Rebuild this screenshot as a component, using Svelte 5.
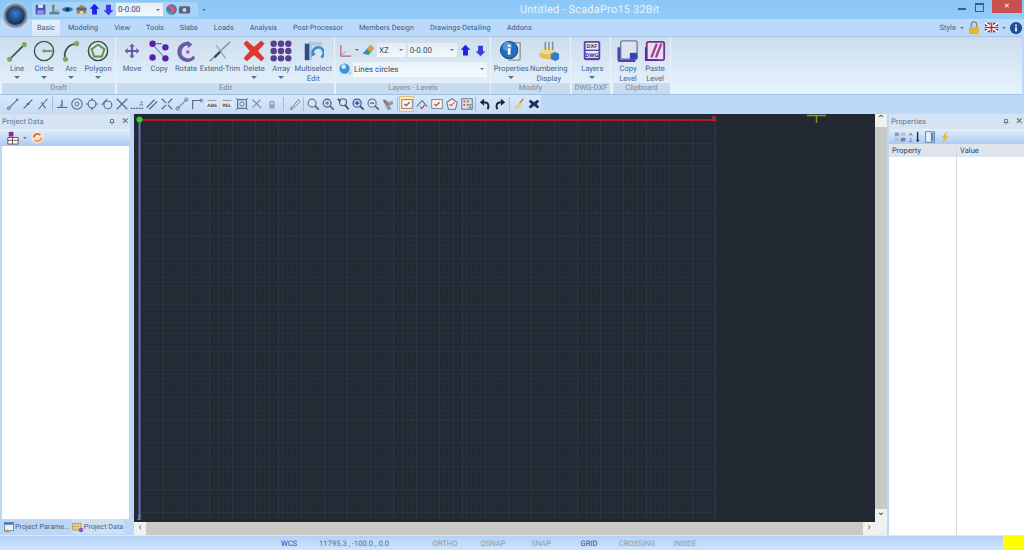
<script>
  const icons = {
    save: '<rect x="2" y="2" width="12" height="12" rx="1" fill="#4a52b8"/><rect x="5" y="2" width="6" height="4" fill="#dfe6f5"/><rect x="4" y="9" width="8" height="5" fill="#8f95d8"/>',
    tools: '<rect x="2" y="11" width="12" height="3" fill="#5d7f93"/><rect x="5" y="2" width="3" height="9" fill="#6d8a7c"/><path d="M8 8h5v3H8z" fill="#9fb2b8"/>',
    eye: '<path d="M1 8c3-4 11-4 14 0-3 4-11 4-14 0z" fill="#2b78b5"/><circle cx="8" cy="8" r="2.2" fill="#0d3358"/>',
    box: '<path d="M2 6l6-4 6 4v7H2z" fill="#b9793a"/><path d="M2 6h12v3H2z" fill="#3f6d9e"/><rect x="6" y="10" width="4" height="3" fill="#f2d9a4"/>',
    up: '<path d="M8 1l6 6h-3v7H5V7H2z" fill="#2222e0"/>',
    down: '<path d="M5 2h6v7h3l-6 6-6-6h3z" fill="#3a3ae8"/>',
    globe: '<circle cx="8" cy="8" r="6.5" fill="#2f7fa8"/><path d="M3 4c4-2 8 0 10 4-1 3-4 5-6 5 2-3 0-6-4-9z" fill="#e2557c"/><path d="M2 9c2 2 4 3 6 4-3 1-5-1-6-4z" fill="#6ecb8f"/>',
    cam: '<rect x="1" y="4" width="14" height="9" rx="2" fill="#56657a"/><circle cx="8" cy="8.5" r="2.5" fill="#c6d3e0"/>',
    lock: '<path d="M5 7V4a3 3 0 0 1 6 0v3" fill="none" stroke="#8a8a80" stroke-width="1.6"/><rect x="2.5" y="7" width="11" height="8" fill="#e8b52e"/>',
    flag: '<rect x="1" y="3" width="14" height="10" fill="#2a3f8f"/><path d="M1 3l14 10M15 3L1 13" stroke="#fff" stroke-width="2"/><path d="M8 3v10M1 8h14" stroke="#fff" stroke-width="3.4"/><path d="M8 3v10M1 8h14" stroke="#d4213d" stroke-width="1.8"/>',
    info: '<circle cx="8" cy="8" r="7" fill="#1f4f96"/><rect x="7" y="7" width="2" height="5" fill="#fff"/><rect x="7" y="4" width="2" height="2" fill="#fff"/>',
    pin: '<path d="M5 3h6v6H5zM8 9v4M3 9h10" fill="none" stroke="#60758c" stroke-width="1.8"/>',
    l1: '<path d="M3 13L13 3" stroke="#556a7c" stroke-width="1.3"/><circle cx="3" cy="13" r="1.6" fill="none" stroke="#556a7c"/><circle cx="13" cy="3" r="1.2" fill="#556a7c"/>',
    l2: '<path d="M3 13L13 3" stroke="#556a7c" stroke-width="1.3"/><circle cx="8" cy="8" r="1.5" fill="#556a7c"/>',
    l3: '<path d="M3 14L13 2M6 6l5 7" stroke="#556a7c" stroke-width="1.2"/>',
    perp: '<path d="M2 12h12M8 3v9" stroke="#556a7c" stroke-width="1.4"/><path d="M5 12a3 3 0 0 1 3-3" fill="none" stroke="#c85a5a"/>',
    center: '<circle cx="8" cy="8" r="6" fill="none" stroke="#556a7c" stroke-width="1.2"/><circle cx="8" cy="8" r="2.2" fill="none" stroke="#556a7c"/>',
    quad: '<circle cx="8" cy="8" r="4.5" fill="none" stroke="#556a7c" stroke-width="1.2"/><path d="M8 1v3M8 12v3M1 8h3M12 8h3" stroke="#556a7c" stroke-width="1.2"/>',
    tan: '<circle cx="9" cy="9" r="4.5" fill="none" stroke="#556a7c" stroke-width="1.2"/><path d="M2 9l6-7" stroke="#556a7c" stroke-width="1.2"/>',
    cross: '<path d="M2 2l12 12M14 2L2 14" stroke="#556a7c" stroke-width="1.4"/>',
    dash: '<path d="M1 13h14" stroke="#556a7c" stroke-width="1.2" stroke-dasharray="2 1"/><circle cx="13" cy="6" r="1" fill="#556a7c"/><path d="M11 9h4" stroke="#556a7c"/>',
    par: '<path d="M2 12L11 3M5 14l9-9" stroke="#556a7c" stroke-width="1.5"/>',
    xs: '<path d="M2 2l5 5M14 2L9 7M2 14l5-5M14 14L9 9" stroke="#556a7c" stroke-width="1.4"/>',
    lw: '<path d="M3 13L13 3" stroke="#4b8fd0" stroke-width="1.3"/><circle cx="3" cy="13" r="1.8" fill="none" stroke="#556a7c"/><circle cx="13" cy="3" r="1.8" fill="none" stroke="#556a7c"/>',
    corner: '<path d="M3 14V4h10" fill="none" stroke="#556a7c" stroke-width="1.3"/><circle cx="13" cy="4" r="1.6" fill="none" stroke="#556a7c"/>',
    abs: '<rect x="1" y="6" width="14" height="6" fill="#e9eff6"/><path d="M3 4h10" stroke="#8a97a5"/><text x="8" y="11" font-size="5.5" font-weight="700" text-anchor="middle" fill="#3c4a5a" font-family="Liberation Sans">ABS</text>',
    rel: '<rect x="1" y="6" width="14" height="6" fill="#e9eff6"/><path d="M3 4h10" stroke="#8a97a5"/><text x="8" y="11" font-size="5.5" font-weight="700" text-anchor="middle" fill="#3c4a5a" font-family="Liberation Sans">REL</text>',
    frame: '<rect x="3" y="3" width="10" height="10" fill="none" stroke="#556a7c" stroke-width="1.3"/><circle cx="8" cy="8" r="2.5" fill="none" stroke="#556a7c"/><path d="M1 1l2 2M15 1l-2 2M1 15l2-2M15 15l-2-2" stroke="#556a7c"/>',
    snapx: '<path d="M3 3l9 9M12 3L3 12" stroke="#6e7f8e" stroke-width="1.2"/><circle cx="12" cy="12" r="1.5" fill="#a8b4bf"/>',
    hand: '<path d="M5 13V7a3 3 0 0 1 6 0v6z" fill="#9aa4ad"/><circle cx="8" cy="7" r="1.5" fill="#cdd4da"/>',
    pen: '<path d="M3 14L12 3l2 2L5 14z" fill="#e8edf2" stroke="#5f6f7e"/><path d="M3 14l1.2-3" stroke="#c85a5a"/>',
    zoom: '<circle cx="7" cy="7" r="4.5" fill="#d9e3ee" stroke="#66788a" stroke-width="1.4"/><path d="M10 10l4.5 4.5" stroke="#55626e" stroke-width="2"/>',
    zoomall: '<circle cx="7" cy="7" r="4.5" fill="#c9d8e8" stroke="#4f6478" stroke-width="1.4"/><path d="M5 7h4M7 5v4" stroke="#4f6478"/><path d="M10 10l4.5 4.5" stroke="#55626e" stroke-width="2"/>',
    zoomback: '<circle cx="8" cy="6" r="4" fill="#d9e3ee" stroke="#4f6478" stroke-width="1.4"/><path d="M2 2l3 3M10 9l4.5 5" stroke="#3e4a55" stroke-width="1.8"/>',
    zoomin: '<circle cx="7" cy="7" r="4.7" fill="#bed3ea" stroke="#3c6b9a" stroke-width="1.4"/><path d="M4.5 7h5M7 4.5v5" stroke="#1f4f86" stroke-width="1.3"/><path d="M10 10l4.5 4.5" stroke="#3e4a55" stroke-width="2"/>',
    zoomout: '<circle cx="7" cy="7" r="4.7" fill="#d9e3ee" stroke="#6a8096" stroke-width="1.4"/><path d="M4.5 7h5" stroke="#45586b" stroke-width="1.3"/><path d="M10 10l4.5 4.5" stroke="#55626e" stroke-width="2"/>',
    zoomx: '<path d="M2 3c3-1 5 1 7 3l4-2 1 4-4 2 2 4-4 1-3-5z" fill="#8c9aa8"/><path d="M3 4l5 5" stroke="#c94a4a" stroke-width="1.4"/>',
    chk: '<rect x="2" y="3" width="12" height="10" fill="#f7f7f4" stroke="#6e7b88"/><path d="M5 8l2 2 4-4" fill="none" stroke="#d03a3a" stroke-width="1.4"/>',
    chkl: '<path d="M2 11l6-7 6 7" fill="none" stroke="#5f7080" stroke-width="1.3"/><path d="M6 11l2 2 3-4" fill="none" stroke="#d03a3a" stroke-width="1.3"/>',
    chkp: '<path d="M8 2l6 4-2 8H4L2 6z" fill="#eef1f5" stroke="#6e7b88" stroke-width="1.2"/><path d="M5 8l2 2 4-4" fill="none" stroke="#d03a3a" stroke-width="1.2"/>',
    chkg: '<rect x="2" y="2" width="12" height="12" fill="#d5dfe6" stroke="#5e7080"/><path d="M4 4h2v2H4zM8 4h2v2H8zM4 8h2v2H4zM8 8h2v2H8z" fill="#d24b5c"/><path d="M10 11h3v2h-3zM11 8h2v2h-2z" fill="#3f9a6b"/>',
    undo: '<path d="M11 14c2-4 1-8-4-8" fill="none" stroke="#1e2730" stroke-width="2.2"/><path d="M2 6l5-4v8z" fill="#1e2730"/>',
    redo: '<path d="M5 14c-2-4-1-8 4-8" fill="none" stroke="#1e2730" stroke-width="2.2"/><path d="M14 6L9 2v8z" fill="#1e2730"/>',
    broom: '<path d="M13 2L8 8" stroke="#b6864a" stroke-width="1.6"/><path d="M8 6l3 3-4 5-5-1z" fill="#e6cf8c"/>',
    del: '<path d="M4 3l4 3 4-3 2 2-3 3 3 3-2 2-4-3-4 3-2-2 3-3-3-3z" fill="#17325e"/>',
    tree: '<rect x="4" y="2" width="5" height="5" fill="#8a2a8f"/><path d="M3 8h11v7H3z" fill="#fff" stroke="#6a4a50"/><path d="M8 8v7M3 11h11" stroke="#6a4a50"/>',
    refresh: '<circle cx="8" cy="8" r="6.5" fill="#f7e6d8"/><path d="M4 8a4 4 0 0 1 7-2.500" fill="none" stroke="#dc6a2a" stroke-width="2"/><path d="M12 8a4 4 0 0 1-7 2.500" fill="none" stroke="#e89a50" stroke-width="2"/>',
    catg: '<rect x="2" y="3" width="5" height="4" fill="#8ba0b4"/><rect x="9" y="3" width="5" height="4" fill="#b5c3d0"/><rect x="2" y="9" width="5" height="4" fill="#b5c3d0"/><rect x="9" y="9" width="5" height="4" fill="#6f8396"/>',
    az: '<path d="M11 2v11" stroke="#26323e" stroke-width="1.6"/><path d="M9 11l2 3 2-3z" fill="#26323e"/><text x="1" y="7" font-size="6" fill="#b5425f" font-family="Liberation Sans">A</text><text x="1" y="14" font-size="6" fill="#3a55b8" font-family="Liberation Sans">Z</text>',
    pages: '<rect x="3" y="2" width="10" height="12" fill="#e8f0f8" stroke="#4f7fa8"/><rect x="9" y="3" width="3" height="10" fill="#4f86bc"/>',
    bolt: '<path d="M10 1L4 9h3l-2 6 7-8H9z" fill="#e8bd2a"/>',
    tabp: '<rect x="2" y="2" width="12" height="11" fill="#e9f0f8" stroke="#4d78ad"/><rect x="2" y="2" width="12" height="3" fill="#4d78ad"/><path d="M1 15l5-4 3 4z" fill="#d8962a"/>',
    tabd: '<rect x="1" y="3" width="11" height="9" fill="#f0dc9a" stroke="#a88a3a"/><path d="M4 3v9M8 3v9M1 7h11" stroke="#b4a050"/><circle cx="12" cy="12" r="3" fill="#8a5ab0"/>',
    bubble: '<circle cx="7" cy="7" r="5.500" fill="#3f93d8"/><circle cx="6" cy="5" r="2.500" fill="#cfe8fa"/><path d="M8 13h6v-4a5 5 0 0 1-6 4z" fill="#8cb9e0"/>',
    axis: '<path d="M3 14V2M3 14h11" stroke="#c8606a" stroke-width="1.3"/><path d="M3 14l5-5" stroke="#8a98a8"/>',
    palette: '<path d="M2 12L11 2l4 4-6 8z" fill="#5fae78"/><path d="M7 7l4-5 4 4-4 4z" fill="#e89a44"/><path d="M2 12l5-5 3 3-2 3z" fill="#3f86c0"/>'
  };

  const big = {
    line: '<path d="M4 21L20 5" stroke="#3a4b42" stroke-width="1.8"/><circle cx="4" cy="21" r="2.800" fill="#7daa5a"/><circle cx="20" cy="5" r="2.800" fill="#7daa5a"/>',
    circle: '<circle cx="12" cy="12" r="10.500" fill="none" stroke="#42524c" stroke-width="1.500"/><path d="M12 12h9" stroke="#42524c" stroke-width="1.300"/><circle cx="12" cy="12" r="2" fill="#7daa5a"/><circle cx="20" cy="12" r="1.500" fill="#7daa5a"/>',
    arc: '<path d="M6 22C3 13 8 5 18 4" fill="none" stroke="#42524c" stroke-width="2"/><circle cx="6" cy="21" r="2.800" fill="#7daa5a"/><circle cx="18" cy="4" r="2.800" fill="#7daa5a"/>',
    polygon: '<circle cx="12" cy="12" r="10.500" fill="#dbe5ea" stroke="#3d4a46" stroke-width="1.600"/><path d="M12 5l7 5-2.700 8H7.700L5 10z" fill="none" stroke="#5d8d58" stroke-width="2"/>',
    move: '<g transform="translate(2.400 2.400) scale(.8)"><path d="M12 2l4 4h-2.500v4.500H18V8l4 4-4 4v-2.500h-4.500V18H16l-4 4-4-4h2.500v-4.500H6V16l-4-4 4-4v2.500h4.500V6H8z" fill="#6a58a8"/></g>',
    copy: '<circle cx="5" cy="4" r="3.500" fill="#5a1fa8"/><circle cx="19" cy="8" r="3.500" fill="#5a1fa8"/><circle cx="5" cy="19" r="3.500" fill="#5a1fa8"/><circle cx="19" cy="20" r="3.500" fill="#5a1fa8"/><path d="M7 7l9 10M9 4h6" stroke="#40506a"/>',
    rotate: '<path d="M15 2v4a7 7 0 1 0 5 11l2 3A11 11 0 1 1 15 2z" fill="#6d58a8"/><path d="M14 1l5 4-5 4z" fill="#6d58a8"/><circle cx="14" cy="13" r="2" fill="#d254b0"/>',
    trim: '<path d="M1 23L23 2" stroke="#8b9aa8" stroke-width="1.800"/><path d="M8 6l10 14" stroke="#8b9aa8" stroke-width="1.200"/><path d="M6 19l6-6" stroke="#3c4b5a" stroke-width="2.500"/>',
    del: '<path d="M4 1l8 7 8-7 3 3-7 8 7 8-3 3-8-7-8 7-3-3 7-8-7-8z" fill="#e5342a" stroke="#a82820" stroke-width=".6"/>',
    array: '<g fill="#56408c"><circle cx="4" cy="4" r="3.500"/><circle cx="12" cy="4" r="3.500"/><circle cx="20" cy="4" r="3.500"/><circle cx="4" cy="12" r="3.500"/><circle cx="12" cy="12" r="3.500"/><circle cx="20" cy="12" r="3.500"/><circle cx="4" cy="20" r="3.500"/><circle cx="12" cy="20" r="3.500"/><circle cx="20" cy="20" r="3.500"/></g>',
    multi: '<path d="M7 2h15v4H11v16H7z" fill="#b5c6d6"/><rect x="3" y="4" width="5" height="18" fill="#2d4f88"/><path d="M12 16a6 6 0 1 1 9 3" fill="none" stroke="#3f8ccc" stroke-width="3"/><path d="M12 12l3 4-5 2z" fill="#3f8ccc"/>',
    props: '<path d="M9 22h11a2 2 0 0 0 2-2V3H14" fill="#dde6ee" stroke="#8d9aa5" stroke-width="1.500"/><circle cx="10" cy="11" r="9.500" fill="#1f6fc2" stroke="#11406f"/><circle cx="8" cy="7" r="5" fill="#6cb5ef" opacity=".6"/><rect x="8.500" y="9" width="3" height="7" fill="#fff"/><rect x="8.500" y="5" width="3" height="2.500" fill="#fff"/>',
    number: '<ellipse cx="11" cy="16" rx="10" ry="5" fill="#e7bf63"/><ellipse cx="10" cy="12" rx="7" ry="3.500" fill="#f1d891"/><path d="M8 2v9M12 2v9M16 2v9" stroke="#7f8da0" stroke-width="1.600"/><path d="M14 15l5-2 4 2v6l-4 2-5-2z" fill="#2f7fc8"/>',
    layers: '<rect x="3" y="1" width="18" height="21" rx="2" fill="#5c3fb0"/><rect x="5" y="3" width="14" height="7.500" fill="#e8edf4"/><rect x="5" y="12" width="14" height="7.500" fill="#e8edf4"/><text x="12" y="9" font-size="6" font-weight="700" text-anchor="middle" fill="#2c2c50" font-family="Liberation Sans">DXF</text><text x="12" y="18" font-size="6" font-weight="700" text-anchor="middle" fill="#2c2c50" font-family="Liberation Sans">DWG</text>',
    copyl: '<rect x="4" y="1" width="18" height="20" rx="2" fill="#dbe3ec" stroke="#6c7ea8" stroke-width="1.500"/><path d="M2 8v13a2 2 0 0 0 2 2h16" fill="none" stroke="#4a42b4" stroke-width="3"/><rect x="14" y="14" width="8" height="7" fill="#3546b0"/>',
    pastel: '<rect x="3" y="2" width="19" height="20" rx="2" fill="#e4e0ee" stroke="#7a2f8f" stroke-width="2"/><path d="M8 19l6-15M13 19l6-15" stroke="#a63a90" stroke-width="2.500"/><path d="M2 8v14h14" fill="none" stroke="#5a2a9c" stroke-width="2"/>'
  };

  const tabs = ['Modeling', 'View', 'Tools', 'Slabs', 'Loads', 'Analysis', 'Post-Processor', 'Members Design', 'Drawings-Detailing', 'Addons'];

  const toolset = [
    ['l1', 'l2', 'l3'],
    ['perp', 'center', 'quad', 'tan', 'cross', 'dash', 'par', 'xs', 'lw', 'corner', 'abs', 'rel', 'frame', 'snapx', 'hand'],
    ['pen'],
    ['zoom', 'zoomall', 'zoomback', 'zoomin', 'zoomout', 'zoomx'],
    ['chk', 'chkl', 'chk', 'chkp', 'chkg'],
    ['undo', 'redo'],
    ['broom', 'del']
  ];

  const gridW = 575;
  const gridH = 399;
</script>

{#snippet icon(name, size = 15)}
  <svg class="ic" width={size} height={size} viewBox="0 0 16 16">{@html icons[name]}</svg>
{/snippet}

{#snippet tool(name, label, second, arrow, cls = '')}
  <div class="tool {cls}">
    <svg width="22" height="22" viewBox="0 0 24 24">{@html big[name]}</svg>
    <span class="tool-label">{label}</span>
    {#if second}<span class="tool-label">{second}</span>{/if}
    {#if arrow}<i class="arrow"></i>{/if}
  </div>
{/snippet}

<div class="app">
  <header class="titlebar">
    <div class="qat">
      {@render icon('save', 13)}
      {@render icon('tools', 13)}
      {@render icon('eye', 13)}
      {@render icon('box', 13)}
      {@render icon('up', 13)}
      {@render icon('down', 13)}
      <div class="combo qat-combo"><span>0-0.00</span><i class="arrow small"></i></div>
      {@render icon('globe', 13)}
      {@render icon('cam', 13)}
    </div>
    <i class="arrow small qat-more"></i>
    <div class="title">Untitled - ScadaPro15 32Bit</div>
    <div class="winctl">
      <span class="min"></span>
      <span class="restore"></span>
      <span class="close">✕</span>
    </div>
    <div class="orb"><div class="orb-in"></div></div>
  </header>

  <nav class="tabs">
    <div class="tab active">Basic</div>
    {#each tabs as t}
      <div class="tab">{t}</div>
    {/each}
    <div class="tab-right">
      <span class="style-lbl">Style</span>
      <i class="arrow small"></i>
      {@render icon('lock', 14)}
      {@render icon('flag', 15)}
      <i class="arrow small"></i>
      {@render icon('info', 14)}
    </div>
  </nav>

  <section class="ribbon">
    <div class="group draft">
      <div class="items">
        {@render tool('line', 'Line', '', true)}
        {@render tool('circle', 'Circle', '', true)}
        {@render tool('arc', 'Arc', '', true)}
        {@render tool('polygon', 'Polygon', '', true)}
      </div>
      <div class="band">Draft</div>
    </div>
    <div class="group edit">
      <div class="items">
        {@render tool('move', 'Move')}
        {@render tool('copy', 'Copy')}
        {@render tool('rotate', 'Rotate')}
        {@render tool('trim', 'Extend-Trim', '', false, 'w41')}
        {@render tool('del', 'Delete', '', true)}
        {@render tool('array', 'Array', '', true)}
        {@render tool('multi', 'Multiselect', 'Edit', false, 'w38')}
      </div>
      <div class="band">Edit</div>
    </div>
    <div class="group levels">
      <div class="lev">
        <div class="lev-row">
          {@render icon('axis', 15)}
          <i class="arrow small"></i>
          {@render icon('palette', 14)}
          <div class="combo xz"><span>XZ</span><i class="arrow small"></i></div>
          <div class="combo lev-combo"><span>0-0.00</span><i class="arrow small"></i></div>
          {@render icon('up', 13)}
          {@render icon('down', 13)}
        </div>
        <div class="lev-row second">
          {@render icon('bubble', 15)}
          <div class="combo lines"><span>Lines circles</span><i class="arrow small"></i></div>
        </div>
      </div>
      <div class="band">Layers - Levels</div>
    </div>
    <div class="group modify">
      <div class="items">
        {@render tool('props', 'Properties', '', true, 'w38')}
        {@render tool('number', 'Numbering', 'Display', false, 'w38')}
      </div>
      <div class="band">Modify</div>
    </div>
    <div class="group dwg">
      <div class="items">
        {@render tool('layers', 'Layers', '', true, 'w38')}
      </div>
      <div class="band">DWG-DXF</div>
    </div>
    <div class="group clip">
      <div class="items">
        {@render tool('copyl', 'Copy', 'Level')}
        {@render tool('pastel', 'Paste', 'Level')}
      </div>
      <div class="band">Clipboard</div>
    </div>
  </section>

  <div class="toolbar">
    {#each toolset as set, i}
      {#if i > 0}<span class="sep" class:wide={i === 2}></span>{/if}
      {#each set as name, j}
        <span class="tb" class:on={name === 'chk' && j === 0}>{@render icon(name, 14)}</span>
      {/each}
    {/each}
  </div>

  <main class="main">
    <aside class="left">
      <div class="phead"><span class="ptitle">Project Data</span>{@render icon('pin', 8)}<span class="px">✕</span></div>
      <div class="pbar">
        {@render icon('tree', 15)}
        <i class="arrow small"></i>
        {@render icon('refresh', 15)}
      </div>
      <div class="plist"></div>
      <div class="ptabs">
        <div class="ptab">{@render icon('tabp', 12)}<span>Project Parame...</span></div>
        <div class="ptab cur">{@render icon('tabd', 12)}<span>Project Data</span></div>
      </div>
    </aside>

    <div class="view">
      <div class="view-top">
        <svg class="canvas" viewBox="0 0 741 407" preserveAspectRatio="none">
          <defs>
            <pattern id="minor" width="4.6" height="4.6" patternUnits="userSpaceOnUse" x="6" y="6">
              <path d="M4.600 0H0V4.600" fill="none" stroke="#2a323e" stroke-width="1"/>
            </pattern>
            <pattern id="major" width="23" height="23" patternUnits="userSpaceOnUse" x="6" y="6">
              <path d="M23 0H0V23" fill="none" stroke="#303946" stroke-width="1"/>
            </pattern>
          </defs>
          <rect x="6" y="6" width={gridW} height={gridH} fill="url(#minor)"/>
          <rect x="6" y="6" width={gridW} height={gridH} fill="url(#major)"/>
          <path d="M581 6V405" stroke="#38414e" stroke-width="1"/>
          <path d="M5.500 6V405" stroke="#6d6fc8" stroke-width="1.800"/>
          <path d="M6 6H580" stroke="#b01c26" stroke-width="1.800"/>
          <path d="M578 2l4 5M582 2l-4 5" stroke="#c8283a" stroke-width="1.400"/>
          <circle cx="5.500" cy="5.500" r="3" fill="#2fd02f"/>
          <text x="3" y="405" font-size="7" fill="#7c7ed8" font-family="Liberation Sans">Z</text>
          <path d="M673 1.500H692M682.500 1.500V9" stroke="#7f9a2e" stroke-width="1.400"/>
        </svg>
        <div class="vscroll"><span class="sb-btn">⌃</span><div class="sb-track"></div><span class="sb-btn dn">⌄</span></div>
      </div>
      <div class="hscroll"><span class="sb-btn">‹</span><div class="sb-track"></div><span class="sb-btn">›</span><span class="sb-end"></span></div>
    </div>

    <aside class="right">
      <div class="phead"><span class="ptitle">Properties</span>{@render icon('pin', 8)}<span class="px">✕</span></div>
      <div class="pbar rbar">
        {@render icon('catg', 14)}
        {@render icon('az', 14)}
        {@render icon('pages', 14)}
        {@render icon('bolt', 14)}
      </div>
      <div class="grid-head"><span class="c1">Property</span><span class="c2">Value</span></div>
      <div class="grid-body"><span class="c1"></span><span class="c2"></span></div>
    </aside>
  </main>

  <footer class="status">
    <span class="s wcs on">WCS</span>
    <span class="s coords">11795.3 , -100.0 , 0.0</span>
    <span class="s ortho">ORTHO</span>
    <span class="s">OSNAP</span>
    <span class="s">SNAP</span>
    <span class="s on">GRID</span>
    <span class="s">CROSSING</span>
    <span class="s">INSIDE</span>
    <span class="yellow"></span>
  </footer>
</div>

<style>
  :global(body) {
    margin: 0;
    background: #bcd9fa;
  }

  .app {
    width: 1024px;
    height: 550px;
    display: flex;
    flex-direction: column;
    overflow: hidden;
    font-family: Roboto, "Noto Sans", sans-serif;
    font-size: 7.6px;
    text-rendering: geometricPrecision;
    color: #45648a;
    background: #bcd9fa;
  }

  .ic {
    display: block;
    flex: none;
  }

  .arrow {
    display: block;
    width: 0;
    height: 0;
    border: 3px solid transparent;
    border-top: 3px solid #5a7088;
    border-bottom: 0;
  }

  .arrow.small {
    border-width: 2px;
    border-bottom: 0;
    border-top-color: #60758c;
    flex: none;
  }

  .titlebar {
    height: 19px;
    flex: none;
    position: relative;
    display: flex;
    align-items: center;
    background: linear-gradient(#8ac6f6, #92ccf9);
    padding-left: 32px;
  }

  .qat {
    height: 15px;
    width: 166px;
    display: flex;
    align-items: center;
    gap: 0.5px;
    padding-left: 2px;
    border-radius: 3px;
    background: #a9d3f6;
    box-sizing: border-box;
  }

  .qat-combo {
    width: 47px;
    height: 13px;
    margin: 0 1px;
  }

  .qat-more {
    margin-left: 4px;
  }

  .combo {
    display: flex;
    align-items: center;
    justify-content: space-between;
    box-sizing: border-box;
    padding: 0 3px 0 2px;
    background: linear-gradient(#e3edf7, #f4f8fc);
    color: #33485f;
    font-size: 8px;
  }

  .title {
    position: absolute;
    left: 520px;
    top: 3px;
    font-size: 11px;
    color: #e9f4fd;
    letter-spacing: 0.2px;
  }

  .winctl {
    position: absolute;
    right: 2px;
    top: 0;
    display: flex;
    align-items: flex-start;
  }

  .min {
    width: 8px;
    height: 2px;
    margin: 8px 9px 0 0;
    background: #3b5f80;
  }

  .restore {
    width: 7px;
    height: 6px;
    margin: 3px 8px 0 0;
    border: 1px solid #3b5f80;
    border-top-width: 2px;
  }

  .close {
    width: 30px;
    height: 13px;
    background: #c9504f;
    color: #fff;
    font-size: 7px;
    line-height: 13px;
    text-align: center;
  }

  .orb {
    position: absolute;
    left: 2px;
    top: 2px;
    width: 27px;
    height: 27px;
    box-sizing: border-box;
    border-radius: 50%;
    padding: 4px;
    z-index: 3;
    background: radial-gradient(circle, #6a7e94 55%, #e8f1fa 75%, #bcd5ec);
  }

  .orb-in {
    width: 100%;
    height: 100%;
    border-radius: 50%;
    background: radial-gradient(circle at 50% 40%, #3f79c4, #12365f 70%);
  }

  .tabs {
    height: 17px;
    flex: none;
    display: flex;
    align-items: flex-end;
    padding-left: 32px;
    background: #bbdafb;
  }

  .tab {
    height: 16px;
    line-height: 16px;
    padding: 0 8px;
    color: #3a5b84;
    font-size: 7.3px;
    white-space: nowrap;
  }

  .tab.active {
    width: 28px;
    padding: 0;
    text-align: center;
    background: linear-gradient(#e8f1fa, #dbe6f1);
  }

  .tab-right {
    margin-left: auto;
    height: 17px;
    display: flex;
    align-items: center;
    gap: 3px;
    padding-right: 1px;
  }

  .style-lbl {
    margin-right: 1px;
  }

  .ribbon {
    height: 59px;
    flex: none;
    display: flex;
    box-sizing: border-box;
    margin-right: 2px;
    padding-left: 2px;
    background: linear-gradient(#cddded, #e6f4fe);
    border-top: 1px solid #a9c4df;
    border-bottom: 1px solid #9fc0e4;
  }

  .group {
    display: flex;
    flex-direction: column;
    flex: none;
    box-sizing: border-box;
    border-right: 1px solid #eaf3fb;
  }

  .draft { width: 114px; margin-right: 1px; }
  .edit { width: 218px; margin-right: 1px; }
  .levels { width: 155px; }
  .modify { width: 80px; margin-right: 1px; }
  .dwg { width: 39px; margin-right: 2px; }
  .clip { width: 58px; }

  .items {
    flex: 1;
    display: flex;
    padding-left: 1.500px;
    min-height: 0;
  }

  .band {
    height: 11px;
    flex: none;
    line-height: 10px;
    text-align: center;
    color: #6f8aa8;
    background: #c9dcee;
  }

  .tool {
    width: 27px;
    flex: none;
    display: flex;
    flex-direction: column;
    align-items: center;
    padding-top: 3px;
    line-height: 9.500px;
  }

  .tool svg {
    margin-bottom: 2px;
  }

  .tool .arrow {
    margin-top: 2px;
  }

  .tool-label {
    white-space: nowrap;
  }

  .tool.w41 { width: 41px; }
  .tool.w38 { width: 37.500px; }

  .lev {
    flex: 1;
    padding: 6px 3px 0 2px;
  }

  .lev-row {
    display: flex;
    align-items: center;
    height: 14px;
    gap: 2px;
    background: #d3e2f0;
  }

  .lev-row.second {
    margin-top: 5px;
    background: none;
    gap: 0;
  }

  .xz { width: 29px; height: 14px; }
  .lev-combo { width: 50px; height: 14px; margin-right: 0; }
  .lines { flex: 1; height: 15px; padding-left: 1px; background: linear-gradient(#e9f1f9, #f6fafd); }

  .toolbar {
    height: 18px;
    width: 541px;
    flex: none;
    display: flex;
    align-items: center;
    box-sizing: border-box;
    padding-left: 5.500px;
    background: linear-gradient(#d7e8fb, #c6dcf6);
  }

  .tb {
    width: 15px;
    height: 16px;
    display: flex;
    align-items: center;
    justify-content: center;
    flex: none;
    box-sizing: border-box;
  }

  .tb.on {
    border: 1px solid #e9bf6e;
    background: #fbe9c4;
  }

  .sep {
    width: 1px;
    height: 14px;
    margin: 0 1.250px;
    background: #a5bcd6;
    flex: none;
  }

  .sep.wide {
    margin: 0 3.500px;
  }

  .main {
    flex: 1;
    display: flex;
    min-height: 0;
    padding-top: 1px;
  }

  .left {
    width: 130px;
    flex: none;
    display: flex;
    flex-direction: column;
    background: #bcd6f6;
  }

  .phead {
    height: 15px;
    flex: none;
    display: flex;
    align-items: center;
    gap: 5px;
    padding: 0 1px 0 2px;
    background: #d5e3f2;
    color: #5c7898;
  }

  .ptitle {
    flex: 1;
  }

  .px {
    font-size: 9px;
    color: #4c6580;
  }

  .pbar {
    height: 17px;
    flex: none;
    display: flex;
    align-items: center;
    gap: 3px;
    padding-left: 5px;
    background: linear-gradient(#e4effb, #a9cbf3);
  }

  .plist {
    flex: 1;
    margin-left: 2px;
    margin-right: 1px;
    background: #fff;
  }

  .ptabs {
    height: 16px;
    flex: none;
    display: flex;
    padding-left: 3px;
    color: #3f5f85;
    font-size: 7.2px;
  }

  .ptab {
    display: flex;
    align-items: center;
    height: 15px;
    padding-right: 1px;
    white-space: nowrap;
  }

  .ptab.cur {
    background: #cfe0f4;
    margin-left: 1px;
  }

  .view {
    width: 757px;
    flex: none;
    margin-left: 1px;
    padding: 0 1px 0 3px;
    box-sizing: border-box;
    display: flex;
    flex-direction: column;
    background: #bcd6f6;
  }

  .view-top {
    flex: 1;
    min-height: 0;
    display: flex;
  }

  .canvas {
    flex: 1;
    min-width: 0;
    height: 100%;
    display: block;
    background: #222933;
  }

  .vscroll {
    width: 12px;
    flex: none;
    display: flex;
    flex-direction: column;
    background: #c9c9c6;
  }

  .sb-btn {
    display: block;
    width: 12px;
    height: 13px;
    flex: none;
    background: #f0f0ee;
    color: #444;
    font-size: 10px;
    line-height: 12px;
    text-align: center;
  }

  .sb-btn.dn {
    line-height: 7px;
  }

  .sb-track {
    flex: 1;
  }

  .hscroll {
    height: 13px;
    flex: none;
    display: flex;
    background: #c9c9c6;
  }

  .sb-end {
    width: 12px;
    flex: none;
    background: #f0f0ee;
  }

  .right {
    flex: 1;
    display: flex;
    flex-direction: column;
    min-width: 0;
    background: #fff;
    margin-left: 1px;
  }

  .rbar {
    height: 15px;
    padding-left: 4px;
    gap: 1px;
  }

  .grid-head {
    height: 13px;
    flex: none;
    display: flex;
    line-height: 13px;
    background: #dfe5ec;
    color: #33475c;
  }

  .c1 {
    width: 68px;
    flex: none;
    padding-left: 3px;
    box-sizing: border-box;
    border-right: 1px solid #d5d9de;
  }

  .c2 {
    flex: 1;
    padding-left: 3px;
  }

  .grid-body {
    flex: 1;
    display: flex;
  }

  .status {
    height: 15px;
    flex: none;
    position: relative;
    display: flex;
    align-items: center;
    padding-left: 265px;
    background: linear-gradient(#b3d1f6, #d0e4fb);
    color: #8a9aab;
    border-top: 1px solid #dce8f5;
    box-sizing: border-box;
  }

  .s {
    width: 48px;
    flex: none;
    text-align: center;
    white-space: nowrap;
  }

  .s.on {
    color: #3440c4;
  }

  .coords {
    width: 82px;
    color: #54708f;
  }

  .ortho {
    margin-left: 26px;
  }

  .yellow {
    position: absolute;
    right: 0;
    top: 0;
    bottom: 0;
    width: 21px;
    background: #ffff00;
  }
</style>
